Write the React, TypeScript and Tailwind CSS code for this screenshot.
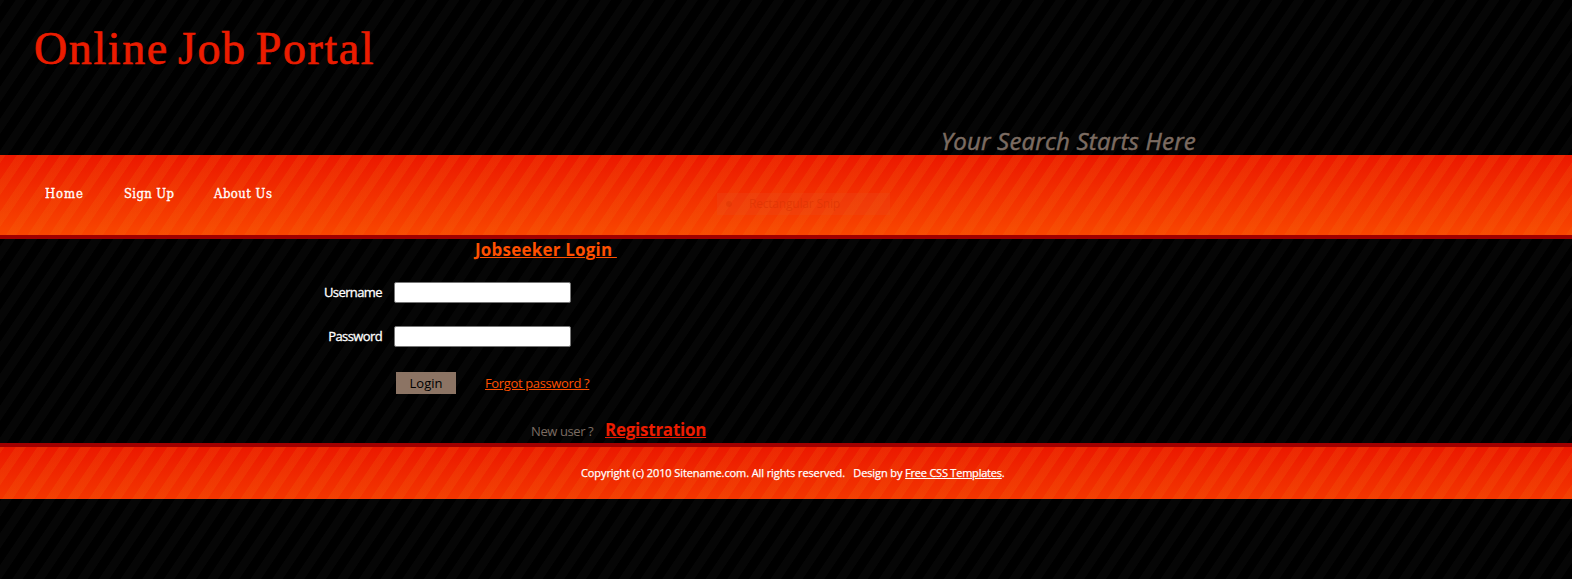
import React from "react";

const pageStripes =
  "bg-[repeating-linear-gradient(124.2deg,rgba(255,255,255,0.024)_0px,rgba(255,255,255,0.024)_3.4px,transparent_4px,transparent_12.7px,rgba(255,255,255,0.024)_13.3px,rgba(255,255,255,0.024)_17.92px)]";
const navStripes =
  "bg-[repeating-linear-gradient(124.2deg,rgba(240,120,20,0.16)_0px,rgba(240,120,20,0.16)_4.4px,transparent_5px,transparent_13.7px,rgba(240,120,20,0.16)_14.3px,rgba(240,120,20,0.16)_17.92px),linear-gradient(to_bottom,#ec1800,#f84600)]";
const footerStripes =
  "bg-[repeating-linear-gradient(124.2deg,rgba(240,120,20,0.16)_0px,rgba(240,120,20,0.16)_3.4px,transparent_4px,transparent_12.7px,rgba(240,120,20,0.16)_13.3px,rgba(240,120,20,0.16)_17.92px),linear-gradient(to_bottom,#ec1800,#f33600)]";

type FieldProps = { label: string; type: string; className: string };

function Field({ label, type, className }: FieldProps) {
  return (
    <label className={`flex h-[21px] items-center text-[13px] text-white ${className}`}>
      <span className="mr-[12px] w-[382px] text-right tracking-[-0.6px] [-webkit-text-stroke:0.3px_white]">{label}</span>
      <input type={type} className="h-[21px] w-[177px] rounded-[2px] border border-[#767676] bg-white px-1 text-black" />
    </label>
  );
}

export default function App() {
  return (
    <div className="h-[579px] overflow-hidden bg-black font-['Open_Sans','Noto_Sans',sans-serif]">
      <div className={`flex h-full flex-col ${pageStripes}`}>
        <header className="flex h-[155px] shrink-0 items-start justify-between">
          <h1 className="ml-[34px] mt-[14px] whitespace-nowrap font-['Liberation_Serif',serif] text-[46px] leading-[70px] tracking-[1.6px] text-[#eb1c00] [-webkit-text-stroke:0.7px_#eb1c00] [word-spacing:-4px]">
            Online Job Portal
          </h1>
          <p className="mr-[376px] mt-[124px] whitespace-nowrap text-[24px] italic leading-[34px] tracking-[0.2px] text-[#7b6b61] [-webkit-text-stroke:0.5px_#7b6b61]">
            Your Search Starts Here
          </p>
        </header>
        <nav className={`relative flex h-[84px] shrink-0 items-start border-b-4 border-[#a00000] pl-[45px] pt-[29px] font-['DejaVu_Serif_Condensed','DejaVu_Serif',serif] text-[13px] leading-[20px] tracking-[0.35px] text-white [-webkit-text-stroke:0.3px_white] ${navStripes}`}>
          <a href="#" className="w-[79px] tracking-[0.9px]">Home</a>
          <a href="#" className="w-[90px]">Sign Up</a>
          <a href="#" className="tracking-[0.45px]">About Us</a>
          <div className="absolute left-[717px] top-[38px] h-[22px] w-[173px] whitespace-nowrap bg-[#e85020]/25 pl-[32px] font-['Open_Sans',sans-serif] text-[12px] leading-[22px] tracking-[-0.2px] text-[#d83000]/60 [-webkit-text-stroke:0px]">
            <span className="absolute left-[9px] top-[8px] size-[6px] rounded-full bg-[#d83000]/40" />
            Rectangular Snip
          </div>
        </nav>
        <main className="flex h-[204px] shrink-0 flex-col items-start">
          <h2 className="ml-[475px] whitespace-pre text-[17px] font-bold leading-[22px] tracking-[0.2px] text-[#ff5000] underline decoration-1 underline-offset-1">
            {"Jobseeker Login "}
          </h2>
          <Field label="Username" type="text" className="mt-[21px]" />
          <Field label="Password" type="password" className="mt-[23px]" />
          <div className="ml-[396px] mt-[25px] flex h-[22px] items-center">
            <button className="h-[22px] w-[60px] bg-[#8c7464] text-[13px] leading-[22px] text-black">Login</button>
            <a href="#" className="ml-[29px] mt-[2px] whitespace-nowrap text-[13px] tracking-[-0.36px] text-[#ff5000] underline">Forgot password ?</a>
          </div>
          <div className="ml-[531px] mt-[23px] flex items-baseline whitespace-nowrap leading-[26px]">
            <span className="w-[74px] text-[13px] tracking-[-0.4px] text-[#7b6b61]">New user ?</span>
            <a href="#" className="text-[17px] font-bold tracking-[-0.25px] text-[#eb1c00] underline decoration-1 underline-offset-1">Registration</a>
          </div>
        </main>
        <footer className={`h-[56px] shrink-0 border-t-4 border-[#a00000] pl-[581px] pt-[16px] text-[11px] leading-[20px] tracking-[-0.1px] text-white [-webkit-text-stroke:0.25px_white] ${footerStripes}`}>
          <p className="whitespace-pre">
            {"Copyright (c) 2010 Sitename.com. All rights reserved.   Design by "}
            <a href="#" className="tracking-[-0.22px] underline">Free CSS Templates</a>.
          </p>
        </footer>
      </div>
    </div>
  );
}
